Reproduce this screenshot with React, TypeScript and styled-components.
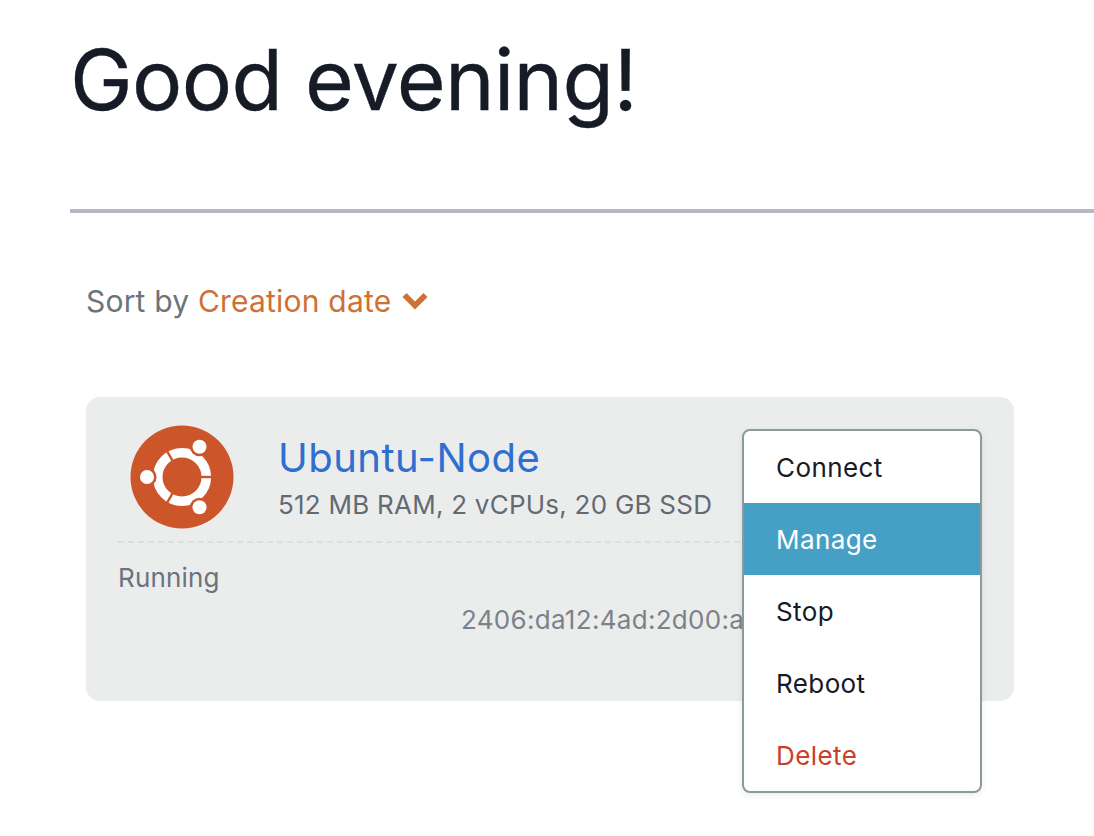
import React from "react";
import styled, { createGlobalStyle } from "styled-components";

const Global = createGlobalStyle`
  html, body { margin: 0; padding: 0; background: #fff; overflow: hidden; }
  body { font-family: Inter, "Liberation Sans", sans-serif; }
`;

const Page = styled.main`
  width: 1094px;
  height: 836px;
  padding-left: 70px;
  box-sizing: border-box;
  overflow: hidden;
`;

const Heading = styled.h1`
  margin: 0;
  height: 209px;
  padding: 29px 0 0 0;
  box-sizing: border-box;
  font-size: 84px;
  line-height: 102px;
  font-weight: 400;
  letter-spacing: -0.67px;
  color: #161b26;
  -webkit-text-stroke: 0.4px #161b26;
`;

const Divider = styled.hr`
  margin: 0;
  border: 0;
  height: 4px;
  background: #b4b9c3;
`;

const SortRow = styled.div`
  display: flex;
  align-items: center;
  gap: 11px;
  margin: 70px 0 0 16px;
  height: 36px;
  font-size: 30px;
  letter-spacing: 0.2px;
  color: #6b737c;
`;

const SortLabel = styled.span`
  white-space: pre;
`;

const SortValue = styled.span`
  color: #cf7034;
`;

const Card = styled.section`
  position: relative;
  width: 928px;
  height: 304px;
  margin: 78px 0 0 16px;
  padding: 28px 32px 0;
  box-sizing: border-box;
  border-radius: 14px;
  background: #ebeded;
`;

const CardHead = styled.div`
  display: flex;
  align-items: center;
  gap: 44px;
  padding: 0 0 12px 12px;
  border-bottom: 2px dashed #dcdfde;
  width: 650px;
`;

const Titles = styled.div`
  display: flex;
  flex-direction: column;
  gap: 3px;
`;

const Name = styled.div`
  font-size: 40px;
  line-height: 52px;
  letter-spacing: 0.47px;
  color: #2f6fcf;
`;

const Spec = styled.div`
  font-size: 26px;
  line-height: 36px;
  letter-spacing: 0.24px;
  color: #626a73;
`;

const Status = styled.div`
  margin-top: 17px;
  font-size: 26px;
  line-height: 36px;
  letter-spacing: 0.15px;
  color: #6b737c;
`;

const Address = styled.div`
  margin-top: 6px;
  padding-left: 343px;
  font-size: 26px;
  line-height: 36px;
  letter-spacing: 0.3px;
  color: #7b8289;
  white-space: nowrap;
`;

const Menu = styled.ul`
  position: absolute;
  left: 656px;
  top: 32px;
  width: 240px;
  height: 364px;
  margin: 0;
  padding: 0;
  box-sizing: border-box;
  list-style: none;
  display: flex;
  flex-direction: column;
  background: #fff;
  border: 2px solid #8a9a9d;
  border-radius: 8px;
  overflow: hidden;
  box-shadow: 0 2px 6px rgba(0, 0, 0, 0.08);
`;

const MenuItem = styled.li<{ $tone?: "active" | "danger" }>`
  height: 72px;
  flex: none;
  padding-left: 32px;
  display: flex;
  align-items: center;
  font-size: 26px;
  letter-spacing: 0.4px;
  color: ${(p) => (p.$tone === "active" ? "#fff" : p.$tone === "danger" ? "#c9402a" : "#161b26")};
  background: ${(p) => (p.$tone === "active" ? "#46a0c6" : "transparent")};
`;

const UbuntuLogo = () => (
  <svg width="104" height="104" viewBox="-52 -52 104 104" aria-hidden="true">
    <circle r="51.5" fill="#cd552a" />
    <circle r="24.3" fill="none" stroke="#fff" strokeWidth="9.6" />
    <g stroke="#cd552a" strokeWidth="2.4">
      <line x1="0" y1="0" x2="32" y2="0" />
      <line x1="0" y1="0" x2="-16" y2="-27.7" />
      <line x1="0" y1="0" x2="-16" y2="27.7" />
    </g>
    <circle cx="-35" cy="0" r="9.6" fill="#cd552a" />
    <circle cx="17.5" cy="-30.3" r="9.6" fill="#cd552a" />
    <circle cx="17.5" cy="30.3" r="9.6" fill="#cd552a" />
    <circle cx="-35" cy="0" r="7" fill="#fff" />
    <circle cx="17.5" cy="-30.3" r="7" fill="#fff" />
    <circle cx="17.5" cy="30.3" r="7" fill="#fff" />
  </svg>
);

const Chevron = () => (
  <svg width="26" height="18" viewBox="0 0 26 18" aria-hidden="true">
    <path d="M0.5 5 L4.5 1 L13 9.5 L21.5 1 L25.5 5 L13 17.5 Z" fill="#cf7034" />
  </svg>
);

export default function App() {
  return (
    <Page>
      <Global />
      <Heading>Good evening!</Heading>
      <Divider />
      <SortRow>
        <SortLabel>
          Sort by <SortValue>Creation date</SortValue>
        </SortLabel>
        <Chevron />
      </SortRow>
      <Card>
        <CardHead>
          <UbuntuLogo />
          <Titles>
            <Name>Ubuntu-Node</Name>
            <Spec>512 MB RAM, 2 vCPUs, 20 GB SSD</Spec>
          </Titles>
        </CardHead>
        <Status>Running</Status>
        <Address>2406:da12:4ad:2d00:a1b2:c3</Address>
        <Menu>
          <MenuItem>Connect</MenuItem>
          <MenuItem $tone="active">Manage</MenuItem>
          <MenuItem>Stop</MenuItem>
          <MenuItem>Reboot</MenuItem>
          <MenuItem $tone="danger">Delete</MenuItem>
        </Menu>
      </Card>
    </Page>
  );
}
